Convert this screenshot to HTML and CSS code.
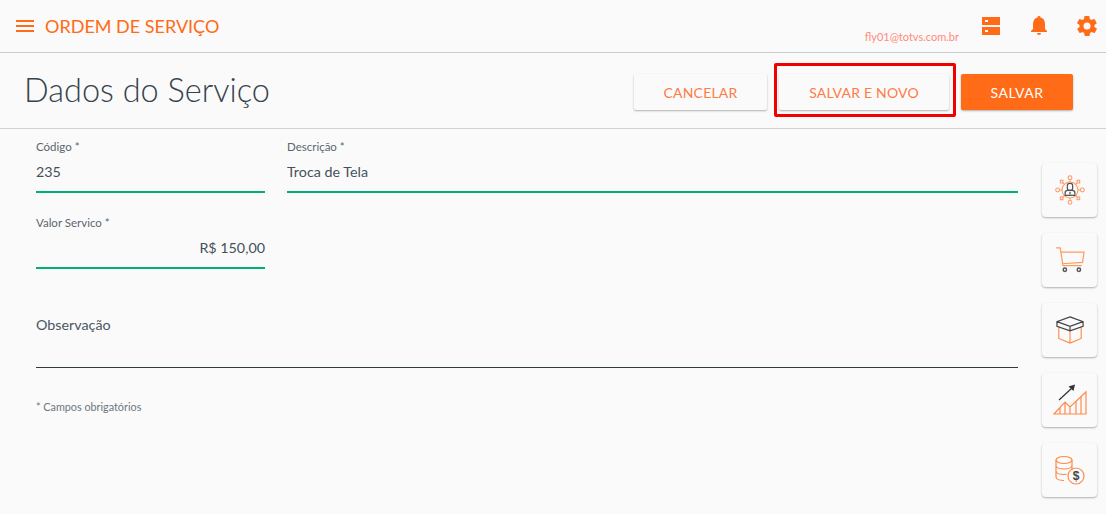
FILE: index.html
```html
<!DOCTYPE html>
<html lang="pt-BR">
<head>
    <meta charset="UTF-8">
    <title>Ordem de Serviço</title>
    <link rel="stylesheet" href="styles.css">
</head>
<body>
    <header class="topbar">
        <svg class="menu-icon" width="18" height="12" viewBox="0 0 18 12"><path d="M0 0h18v2H0zM0 5h18v2H0zM0 10h18v2H0z" fill="#ff6b16"/></svg>
        <span class="app-title">ORDEM DE SERVIÇO</span>
        <span class="user-email">fly01@totvs.com.br</span>
        <svg class="top-icon server-icon" width="18" height="18" viewBox="0 0 18 18"><path fill="#ff6b16" fill-rule="evenodd" d="M0 0h18v8H0zM0 10h18v8H0zM3 3v2h3V3zM3 13v2h3v-2z"/></svg>
        <svg class="top-icon bell-icon" width="18" height="20" viewBox="0 0 18 20"><path fill="#ff6b16" d="M9 0a1.5 1.5 0 0 1 1.5 1.6C13.5 2.3 15 4.8 15 8v5l2 2v1H1v-1l2-2V8c0-3.200 1.500-5.700 4.500-6.400A1.500 1.500 0 0 1 9 0zM7 17h4a2 2 0 0 1-4 0z"/></svg>
        <svg class="top-icon gear-icon" width="20" height="20" viewBox="2 2 20 20"><path fill="#ff6b16" d="M19.4 13c.1-.3.100-.7.100-1s0-.7-.1-1l2.100-1.600c.2-.1.200-.4.100-.6l-2-3.500c-.1-.2-.4-.3-.6-.2l-2.500 1c-.5-.4-1.100-.7-1.700-1l-.4-2.700c0-.2-.2-.4-.5-.4h-4c-.2 0-.5.200-.5.400l-.4 2.700c-.6.300-1.200.6-1.700 1l-2.500-1c-.2-.1-.5 0-.6.200l-2 3.500c-.1.200-.1.500.1.600L4.600 11c-.1.300-.1.700-.1 1s0 .7.100 1l-2.100 1.600c-.2.100-.2.400-.1.600l2 3.500c.1.200.4.300.6.200l2.500-1c.5.400 1.100.7 1.700 1l.4 2.700c0 .2.300.4.500.4h4c.3 0 .5-.2.500-.4l.4-2.700c.6-.3 1.200-.6 1.700-1l2.500 1c.2.100.5 0 .6-.2l2-3.500c.1-.2.100-.5-.1-.6zM12 15.500a3.500 3.500 0 1 1 0-7 3.500 3.500 0 0 1 0 7z"/></svg>
    </header>

    <div class="title-bar">
        <h1>Dados do Serviço</h1>
        <div class="actions">
            <button class="btn btn-cancel">CANCELAR</button>
            <div class="highlight-wrap">
                <button class="btn btn-new">SALVAR E NOVO</button>
                <div class="highlight"></div>
            </div>
            <button class="btn btn-save">SALVAR</button>
        </div>
    </div>

    <main class="content">
        <form class="form">
            <div class="row">
                <div class="field field-small">
                    <label>Código *</label>
                    <div class="value">235</div>
                </div>
                <div class="field field-grow">
                    <label>Descrição *</label>
                    <div class="value">Troca de Tela</div>
                </div>
            </div>
            <div class="row">
                <div class="field field-small">
                    <label>Valor Servico *</label>
                    <div class="value value-right">R$ 150,00</div>
                </div>
            </div>
            <div class="field field-obs">
                <div class="obs-label">Observação</div>
            </div>
            <p class="required-note">* Campos obrigatórios</p>
        </form>

        <aside class="side-buttons">
            <div class="side-btn">
                <svg width="30" height="30" viewBox="0 0 34 34" fill="none" stroke="#ff9a63" stroke-width="1.200">
                    <circle cx="17" cy="17" r="9"/>
                    <circle cx="17" cy="3" r="2.200"/><circle cx="17" cy="31" r="2.200"/><circle cx="3" cy="17" r="2.200"/><circle cx="31" cy="17" r="2.200"/>
                    <rect x="6" y="6" width="3" height="3"/><rect x="25" y="6" width="3" height="3"/><rect x="6" y="25" width="3" height="3"/><rect x="25" y="25" width="3" height="3"/>
                    <path d="M17 5v3M17 26v3M5 17h3M26 17h3M9 9l2 2M25 9l-2 2M9 25l2-2M25 25l-2-2"/>
                    <g stroke="#555" stroke-width="1.400"><rect x="14" y="9.500" width="6" height="8" rx="2.500"/><path d="M11.500 23v-3c0-1.500 1.500-2.500 3-2.500h5c1.500 0 3 1 3 2.500v3z"/><path d="M17 19v3"/></g>
                </svg>
            </div>
            <div class="side-btn">
                <svg width="30" height="28" viewBox="0 0 32 30" fill="none" stroke="#ff9a63" stroke-width="1.300">
                    <path d="M1 2h4.500l3 19h20"/>
                    <path d="M6 6.500h25l-1.500 11-22 1.500"/>
                    <g stroke="#555" stroke-width="1.600"><circle cx="10.500" cy="25.500" r="1.800"/><circle cx="25.500" cy="25.500" r="1.800"/></g>
                </svg>
            </div>
            <div class="side-btn">
                <svg width="30" height="28" viewBox="0 0 32 30" fill="none" stroke="#ff8a4a" stroke-width="1.200">
                    <path d="M4 12v12l12 5 12-5V12M16 15v14"/>
                    <path stroke="#444" stroke-width="1.300" d="M16 1 30 6v5l-14 5-14-5V6zM2 6l14 5 14-5M16 11v5"/>
                </svg>
            </div>
            <div class="side-btn">
                <svg width="34" height="32" viewBox="0 0 34 32" fill="none" stroke="#ff8a4a" stroke-width="1.200">
                    <path d="M1 30 12 18l5 5 16-15v22zM7 24v6M12 18v12M17 23v7M23 17.500V30M28 12.500V30"/>
                    <path stroke="#333" stroke-width="1.200" d="M6 16 19 4"/>
                    <path fill="#333" stroke="none" d="M22 0.500 20.500 7 15.500 2.500z"/>
                </svg>
            </div>
            <div class="side-btn">
                <svg width="30" height="30" viewBox="2 0 30 30" fill="none" stroke="#ff8a4a" stroke-width="1.200">
                    <ellipse cx="11" cy="5" rx="8" ry="3.500"/>
                    <path d="M3 5v17c0 2 3.500 3.500 8 3.500M19 5v10M3 10.500c0 2 3.500 3.500 8 3.500s8-1.500 8-3.500M3 16c0 2 3.500 3.500 8 3.500 1 0 2 0 2.500-.2"/>
                    <circle cx="23" cy="21" r="8"/>
                    <text class="coin-text" x="23" y="25" text-anchor="middle">$</text>
                </svg>
            </div>
        </aside>
    </main>
</body>
</html>
```

FILE: styles.css
```css
* {
    box-sizing: border-box;
}
body {
    font-family: "Lato", sans-serif;
    margin: 0;
    padding: 0;
    background: #fafafa;
    color: #37424a;
    height: 514px;
    overflow: hidden;
}
.topbar {
    display: flex;
    align-items: center;
    height: 53px;
    padding: 0 9px 0 16px;
    border-bottom: 1px solid #c7ccd1;
}
.menu-icon {
    margin-right: 11px;
}
.app-title {
    font-size: 18px;
    color: #ff6b16;
}
.user-email {
    margin-left: auto;
    margin-top: 21px;
    font-size: 11px;
    color: #ff8a7a;
}
.server-icon {
    margin-left: 23px;
}
.bell-icon {
    margin-left: 30px;
}
.gear-icon {
    margin-left: 29px;
}
.title-bar {
    display: flex;
    align-items: center;
    justify-content: space-between;
    height: 76px;
    padding: 0 33px 0 24px;
    border-bottom: 1px solid #d2d2d2;
}
h1 {
    margin: 0 0 3px;
    font-size: 32.500px;
    font-weight: 300;
    color: #37424a;
}
.actions {
    display: flex;
    gap: 12px;
    margin-top: 3px;
}
.btn {
    height: 36px;
    border: none;
    border-radius: 2px;
    font-family: "Lato", sans-serif;
    font-size: 14px;
    letter-spacing: 0.2px;
    background: #fafafa;
    color: #ff7a45;
    box-shadow: 0 1px 2px rgba(0,0,0,0.3);
}
.btn-cancel {
    width: 133px;
}
.btn-new {
    width: 170px;
    display: block;
}
.btn-save {
    width: 112px;
    letter-spacing: 0.5px;
    background: #ff6b16;
    color: #fff;
}
.highlight-wrap {
    position: relative;
}
.highlight {
    position: absolute;
    top: -11px;
    right: -7px;
    bottom: -7px;
    left: -5px;
    border: 3px solid #f00000;
    border-radius: 2px;
}
.content {
    display: flex;
    padding: 0 9px 0 36px;
}
.form {
    flex: 1;
    padding-top: 11px;
    margin-right: 24px;
}
.row {
    display: flex;
    gap: 22px;
    margin-bottom: 23px;
}
.field-small {
    width: 229px;
}
.field-grow {
    flex: 1;
}
label {
    display: block;
    font-size: 11.500px;
    line-height: 14px;
    color: #5a6670;
}
.value {
    height: 39px;
    padding-top: 8px;
    font-size: 14.300px;
    line-height: 20px;
    color: #465059;
    border-bottom: 2px solid #00b07c;
}
.value-right {
    text-align: right;
}
.field-obs {
    height: 60px;
    margin-top: 39px;
    padding-top: 8px;
    border-bottom: 1px solid #2f3a3f;
}
.obs-label {
    font-size: 14.300px;
    color: #4a5660;
}
.required-note {
    margin: 32px 0 0;
    font-size: 10.800px;
    color: #6c7780;
}
.side-buttons {
    display: flex;
    flex-direction: column;
    gap: 16px;
    padding-top: 34px;
}
.side-btn {
    display: flex;
    align-items: center;
    justify-content: center;
    width: 55px;
    height: 54px;
    border-radius: 4px;
    background: #fafafa;
    box-shadow: 0 1px 2px rgba(0,0,0,0.3);
}
.coin-text {
    font-family: "Liberation Sans", sans-serif;
    font-size: 12px;
    font-weight: bold;
    fill: #444;
    stroke: none;
}
```
